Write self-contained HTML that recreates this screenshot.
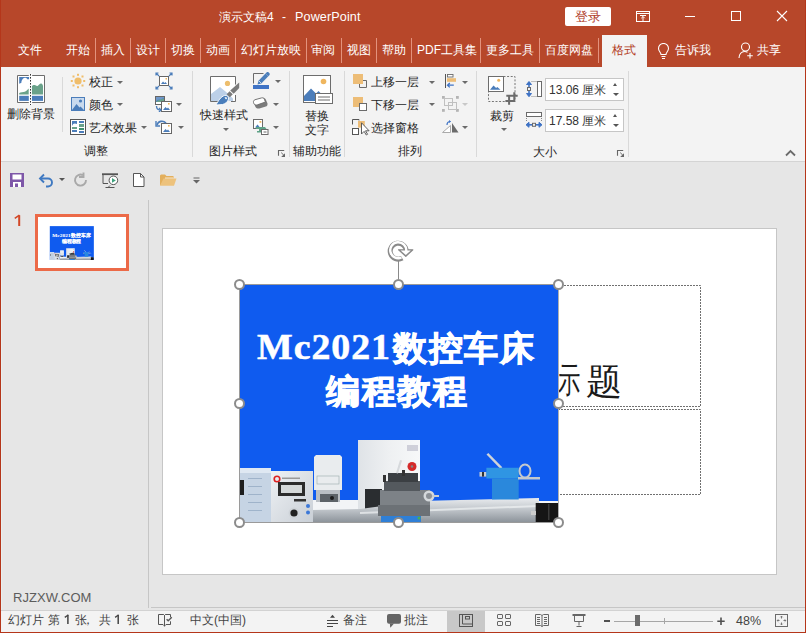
<!DOCTYPE html>
<html><head><meta charset="utf-8">
<style>
*{margin:0;padding:0;box-sizing:border-box}
html,body{width:806px;height:633px;overflow:hidden;background:#E6E6E6;font-family:"Liberation Sans",sans-serif;color:#333}
.a{position:absolute}
#title{left:0;top:0;width:806px;height:67px;background:#B7472A}
.t{position:absolute;font-size:12px;line-height:14px;white-space:nowrap}
.tab{color:#fff;top:43px}
.tsep{position:absolute;top:38px;width:1px;height:25px;background:#E3927D}
#ribbon{left:0;top:67px;width:806px;height:94px;background:#F3F3F3}
#rline{left:0;top:161px;width:806px;height:1px;background:#D4D4D4}
.gsep{position:absolute;width:1px;background:#D9D9D9}
.lbl{color:#262626}
.cj{font-size:34px;line-height:40px;color:#fff;font-weight:bold;width:36px;-webkit-text-stroke:0.9px #fff}
.hd{width:11px;height:11px;border-radius:50%;background:#fff;border:2px solid #8c8c8c}
.sb{top:613px;color:#444}
.dd{position:absolute;width:0;height:0;border-left:3px solid transparent;border-right:3px solid transparent;border-top:3px solid #6a6a6a;margin-left:-0.5px;margin-top:-0.5px}
#frameL{left:0;top:0;width:1px;height:633px;background:#B5361A}
#frameR{left:805px;top:0;width:1px;height:633px;background:#B5361A}
#frameB{left:0;top:632px;width:806px;height:1px;background:#B5361A}
#status{left:0;top:610px;width:806px;height:22px;background:#F3F3F3;border-top:1px solid #D2D2D2}
#slide{left:162px;top:228px;width:615px;height:347px;background:#fff;border:1px solid #C6C6C6}
</style></head><body>
<div id="title" class="a"></div>
<div class="t a" style="left:219px;top:10px;color:#fff;font-size:12px">演示文稿4</div><div class="t a" style="left:282px;top:9.5px;color:#fff;font-size:12px">-</div><div class="t a" style="left:295px;top:10px;color:#fff;font-size:12.6px;letter-spacing:0.12px">PowerPoint</div>
<!-- login -->
<div class="a" style="left:565px;top:7px;width:46px;height:19px;background:#fff;border-radius:2px"></div>
<div class="t a" style="left:575px;top:9px;color:#B0402A;font-size:13px;line-height:15px">登录</div>

<!-- tabs -->
<div class="t tab" style="left:18px">文件</div>
<div class="t tab" style="left:66px">开始</div>
<div class="tsep" style="left:95px"></div>
<div class="t tab" style="left:101px">插入</div>
<div class="tsep" style="left:130px"></div>
<div class="t tab" style="left:136px">设计</div>
<div class="tsep" style="left:165px"></div>
<div class="t tab" style="left:171px">切换</div>
<div class="tsep" style="left:200px"></div>
<div class="t tab" style="left:206px">动画</div>
<div class="tsep" style="left:235px"></div>
<div class="t tab" style="left:241px">幻灯片放映</div>
<div class="tsep" style="left:306px"></div>
<div class="t tab" style="left:311px">审阅</div>
<div class="tsep" style="left:341px"></div>
<div class="t tab" style="left:347px">视图</div>
<div class="tsep" style="left:376px"></div>
<div class="t tab" style="left:382px">帮助</div>
<div class="tsep" style="left:411px"></div>
<div class="t tab" style="left:417px">PDF工具集</div>
<div class="tsep" style="left:480px"></div>
<div class="t tab" style="left:486px">更多工具</div>
<div class="tsep" style="left:539px"></div>
<div class="t tab" style="left:545px">百度网盘</div>
<div class="tsep" style="left:598px"></div>
<div class="a" style="left:602px;top:35px;width:45px;height:32px;background:#F3F3F3"></div>
<div class="t tab" style="left:612px;top:42.5px;color:#B23C1E">格式</div>
<div class="t tab" style="left:675px">告诉我</div>
<div class="t tab" style="left:757px">共享</div>

<div id="ribbon" class="a"></div>
<div id="rline" class="a"></div>

<!-- ===== RIBBON CONTENT ===== -->
<!-- group 调整 -->
<svg class="a" style="left:16px;top:73px" width="31" height="33" viewBox="16 73 31 33">
 <rect x="18" y="76" width="26" height="26" fill="#fff"/>
 <path d="M28.8 75.5H17.5v27h11.3M32.2 75.5h12.3v27H32.2" fill="none" stroke="#6D6D6D"/>
 <path d="M19.2 76.9h10v2.6c-0.6-0.5-1.2-0.5-1.6 0c-1-2-3.5-2.3-4.8-0.6c-0.9 0.9-1.5 2.4-1.4 3.8c-0.7 0.2-1.3 0.6-2.2 1.1z" fill="#4B7DBA"/>
 <path d="M19.2 94.6v-1.5c1.5-1 4-1 5.5-1.3c1.5-0.5 2.6-1.8 4-3.3v6.1z" fill="#6AA28A"/>
 <path d="M31.8 94.6v-8.2c0.8-1.2 2.3-1.7 3.6-1.2c0.8 0.3 1.5 1 2.5 0.5c1.2-1 2-2.3 3.2-2.2c1.2 0.2 1.8 1.4 1.9 2.5v8.6z" fill="#6AA28A"/>
 <rect x="19.2" y="95.8" width="9.6" height="5.1" fill="#4B7DBA"/>
 <rect x="31.8" y="95.8" width="11.2" height="5.1" fill="#4B7DBA"/>
 <path d="M30.5 74v31" stroke="#fff" stroke-width="2.5"/><path d="M30.5 74v31" stroke="#333" stroke-width="1" stroke-dasharray="1.6,1.4"/>
</svg>
<div class="t lbl" style="left:7px;top:107px">删除背景</div>
<div class="gsep" style="left:62px;top:77px;height:55px"></div>

<svg class="a" style="left:70px;top:73px" width="16" height="16" viewBox="0 0 16 16">
 <circle cx="8" cy="8" r="3.6" fill="#F0BD6A"/>
 <g fill="#F0BD6A"><rect x="7" y="0.8" width="2" height="2"/><rect x="7" y="13.2" width="2" height="2"/><rect x="0.8" y="7" width="2" height="2"/><rect x="13.2" y="7" width="2" height="2"/>
 <rect x="2.5" y="2.5" width="2" height="2"/><rect x="11.5" y="2.5" width="2" height="2"/><rect x="2.5" y="11.5" width="2" height="2"/><rect x="11.5" y="11.5" width="2" height="2"/></g>
</svg>
<div class="t lbl" style="left:89px;top:75px">校正</div>
<div class="dd" style="left:117px;top:81px"></div>
<svg class="a" style="left:70px;top:96px" width="16" height="16" viewBox="0 0 16 16">
 <rect x="1.5" y="1.5" width="13" height="13" fill="#C9DAEE" stroke="#4B7DBA"/>
 <circle cx="10.5" cy="5" r="1.6" fill="#4B7DBA"/>
 <path d="M2 14l4.5-6l3 3.5l1-1l3.5 3.5z" fill="#4B7DBA"/>
</svg>
<div class="t lbl" style="left:89px;top:98px">颜色</div>
<div class="dd" style="left:117px;top:103px"></div>
<svg class="a" style="left:70px;top:119px" width="17" height="16" viewBox="0 0 17 16">
 <rect x="0.5" y="0.5" width="15" height="15" fill="#fff" stroke="#555"/>
 <rect x="2" y="2" width="5" height="5" fill="#4B7DBA"/><path d="M2 7c1-3 3-3 5-2v2z" fill="#fff"/>
 <rect x="9" y="2" width="5" height="2" fill="#4B7DBA"/><rect x="9" y="5" width="5" height="3" fill="#6AA28A"/>
 <rect x="2" y="8" width="5" height="2" fill="#6AA28A"/><rect x="2" y="11" width="5" height="2" fill="#4B7DBA"/>
 <rect x="9" y="9" width="5" height="2" fill="#3F8F6E"/><rect x="9" y="12" width="5" height="2" fill="#4B7DBA"/>
</svg>
<div class="t lbl" style="left:89px;top:121px">艺术效果</div>
<div class="dd" style="left:141px;top:126px"></div>

<svg class="a" style="left:155px;top:72px" width="18" height="18" viewBox="0 0 18 18">
 <rect x="4.5" y="4.5" width="9" height="9" fill="#fff" stroke="#666"/>
 <path d="M6 12l2-2.5l1.5 1.5l1-1l1.5 2z" fill="#4B7DBA"/><rect x="10.5" y="6" width="1.5" height="1.5" fill="#EFB65E"/>
 <g stroke="#4B7DBA" stroke-width="1.2" fill="none"><path d="M1 1l3 3M1 3.5V1h2.5"/><path d="M17 1l-3 3M17 3.5V1h-2.5"/><path d="M1 17l3-3M1 14.5V17h2.5"/><path d="M17 17l-3-3M17 14.5V17h-2.5"/></g>
</svg>
<svg class="a" style="left:155px;top:96px" width="18" height="16" viewBox="0 0 18 16">
 <rect x="0.5" y="0.5" width="9" height="8" fill="#fff" stroke="#666"/>
 <path d="M1 5c2-2 4-1 8-3v4H1z" fill="#6AA28A"/><path d="M1 1h8v2c-3 0-5 1-8 3z" fill="#4B7DBA" opacity="0.8"/>
 <rect x="6.5" y="5.5" width="10" height="10" fill="#fff" stroke="#666"/>
 <path d="M8 14l2.5-3l1.5 1.5l1-1l2 2.5z" fill="#4B7DBA"/><rect x="13" y="7" width="1.6" height="1.6" fill="#EFB65E"/>
 <path d="M1.5 10c0 3 2 4 4 4" stroke="#4B7DBA" stroke-width="1.3" fill="none"/><path d="M4 12l2 2l-2 2" stroke="#4B7DBA" stroke-width="1.3" fill="none"/>
</svg>
<div class="dd" style="left:176px;top:103px"></div>
<svg class="a" style="left:155px;top:119px" width="18" height="15" viewBox="0 0 18 15">
 <rect x="6.5" y="4.5" width="10" height="10" fill="#fff" stroke="#666"/>
 <path d="M8 13l2.5-3l1.5 1.5l1-1l2 2.5z" fill="#4B7DBA"/><rect x="13" y="6" width="1.6" height="1.6" fill="#EFB65E"/>
 <path d="M2 6c1-4 6-5 9-2" stroke="#4B7DBA" stroke-width="1.6" fill="none"/><path d="M1 2v5h4" stroke="#4B7DBA" stroke-width="1.4" fill="none"/>
</svg>
<div class="dd" style="left:178px;top:126px"></div>
<div class="t lbl" style="left:84px;top:144px">调整</div>
<div class="gsep" style="left:192px;top:71px;height:86px"></div>

<!-- group 图片样式 -->
<svg class="a" style="left:208px;top:74px" width="34" height="33" viewBox="208 74 34 33">
 <rect x="211" y="77" width="24" height="24" fill="#fff"/>
 <path d="M218 101.5h-7.5v-25h25v8M235.5 95v6.5h-4.5" fill="none" stroke="#6D6D6D"/>
 <circle cx="227.5" cy="83.4" r="2.6" fill="#EDBE6E"/>
 <path d="M211 101V93.9l9-6.8l8.5 6.8l4.5 4.5v2.6z" fill="#BCD0E8"/>
 <path d="M239.2 82.5v5.5l-5.5 5.8l-3.5-3.3z" fill="#7a7a7a"/>
 <path d="M232.8 94.2l-3 3l-3.2-3l3-3z" fill="#7a7a7a"/>
 <path d="M216 105c2-4 5-8.5 8.5-9.5c2.2-0.6 4.5 0.8 4 3.5c-0.6 3-3.5 5-6 5.5z" fill="#4A7EBB" stroke="#fff" stroke-width="0.9"/>
 <path d="M224.5 97.5c1-0.6 2.3-0.4 2.8 0.6l-1.3 1.5" fill="#fff"/>
</svg>
<div class="t lbl" style="left:200px;top:108px">快速样式</div>
<div class="dd" style="left:223px;top:128px"></div>
<svg class="a" style="left:252px;top:72px" width="18" height="18" viewBox="252 72 18 18">
 <path d="M253.5 83.5V73.5h10" stroke="#6b6b6b" fill="none"/>
 <path d="M257.5 84.5l1-3.8l7-7.2l2.8 2.8l-7 7.2z" fill="#4A7EBB"/>
 <path d="M265.5 73.5l1-1c0.8-0.6 1.6-0.6 2.2 0l0.6 0.6c0.6 0.6 0.6 1.4 0 2.2l-1 1z" fill="#4A7EBB"/>
 <path d="M259 81l2 2" stroke="#fff" stroke-width="0.7"/>
 <rect x="253" y="85" width="16" height="4" fill="#3F73C5"/>
</svg>
<div class="dd" style="left:275px;top:80px"></div>
<svg class="a" style="left:252px;top:96px" width="17" height="14" viewBox="252 96 17 14">
 <path d="M254 103.5c-0.6-1.5 0-3 1.5-3.8l6.5-1.8c1.6-0.4 3 0.3 3.8 1.6l1.5 3.5c0.6 1.5 0 3-1.5 3.5l-6.5 2c-1.6 0.4-3-0.3-3.8-1.6z" fill="#7b7b7b"/>
 <path d="M253.5 102.5c-0.3-1.2 0.3-2.3 1.5-2.8l6.5-1.8c1.2-0.3 2.3 0.2 2.8 1.3l1.2 2.8l-8 2.8c-1.5 0.5-3 0-3.5-1z" fill="#fff" stroke="#6b6b6b" stroke-width="0.9"/>
</svg>
<div class="dd" style="left:273px;top:103px"></div>
<svg class="a" style="left:252px;top:118px" width="18" height="18" viewBox="252 118 18 18">
 <rect x="253.5" y="119.5" width="9" height="9" fill="#fff" stroke="#6b6b6b"/>
 <path d="M255 127.5l2.5-3l2.5 3z" fill="#4A7EBB"/><rect x="259.5" y="121" width="1.8" height="1.8" fill="#EFB65E"/>
 <path d="M256 127h9l1.5 2h-5.5v3.5h-4v-1.5h2v-2h-3z" fill="#5FA287"/>
 <rect x="261.5" y="129.5" width="6.5" height="5" fill="#fff" stroke="#6b6b6b"/><path d="M263.5 132h3" stroke="#6b6b6b"/>
</svg>
<div class="dd" style="left:273px;top:126px"></div>
<div class="t lbl" style="left:209px;top:144px">图片样式</div>
<svg class="a" style="left:277px;top:149px" width="10" height="10" viewBox="277 149 10 10"><path d="M278.5 155.8V150.5H284.2" stroke="#666" fill="none" stroke-width="1.1"/><path d="M281.2 152.6l2.6 2.6" stroke="#666" stroke-width="1"/><path d="M285 153.2v3.8h-3.8z" fill="#666"/></svg>
<div class="gsep" style="left:289px;top:71px;height:86px"></div>

<!-- group 辅助功能 -->
<svg class="a" style="left:302px;top:74px" width="32" height="32" viewBox="0 0 32 32">
 <rect x="1.5" y="1.5" width="27" height="27" fill="#fff" stroke="#6D6D6D"/>
 <circle cx="21.5" cy="7.5" r="2.8" fill="#EFB65E"/>
 <path d="M2 27V22l7-7.5l5 5l2.5-2.5l5 5V27z" fill="#4B7DBA"/>
 <rect x="13.5" y="19.5" width="17" height="10" fill="#fff" stroke="#6D6D6D"/>
 <path d="M16 23h12M16 26h12" stroke="#6D6D6D"/>
</svg>
<div class="t lbl" style="left:305px;top:109px">替换</div>
<div class="t lbl" style="left:305px;top:123px">文字</div>
<div class="t lbl" style="left:293px;top:144px">辅助功能</div>
<div class="gsep" style="left:344px;top:71px;height:86px"></div>

<!-- group 排列 -->
<svg class="a" style="left:352px;top:73px" width="16" height="16" viewBox="0 0 16 16">
 <path d="M9.5 7.5h5v7h-7v-4" stroke="#6b6b6b" fill="none"/>
 <rect x="1" y="1" width="10" height="10" fill="#EDBD77"/>
</svg>
<div class="t lbl" style="left:371px;top:75px">上移一层</div>
<div class="dd" style="left:429px;top:81px"></div>
<svg class="a" style="left:352px;top:96px" width="16" height="16" viewBox="0 0 16 16">
 <rect x="1" y="1" width="10" height="10" fill="#EDBD77"/>
 <rect x="7.5" y="7.5" width="7" height="7" fill="#fff" stroke="#6b6b6b"/>
</svg>
<div class="t lbl" style="left:371px;top:98px">下移一层</div>
<div class="dd" style="left:429px;top:103px"></div>
<svg class="a" style="left:351px;top:118px" width="19" height="18" viewBox="351 118 19 18">
 <path d="M352.5 124.5v-5h6.5v1" stroke="#555" fill="none"/>
 <rect x="358" y="121" width="6.8" height="6.6" fill="#EDBD77"/>
 <rect x="352.5" y="128.5" width="6" height="6" fill="#fff" stroke="#555"/>
 <path d="M361.5 122.8v11.2l2.6-2.6l2.2 3.6l1.3-0.7l-2.1-3.5h3.6z" fill="#fff" stroke="#555" stroke-width="0.95" stroke-linejoin="round"/>
</svg>
<div class="t lbl" style="left:371px;top:121px">选择窗格</div>
<svg class="a" style="left:444px;top:73px" width="14" height="16" viewBox="444 73 14 16">
 <path d="M445.5 74v14" stroke="#555"/>
 <rect x="447.5" y="74.5" width="5.5" height="2.5" fill="#fff" stroke="#6b6b6b" stroke-width="0.9"/>
 <rect x="447" y="78.2" width="9" height="3.6" fill="#EDBD77"/>
 <path d="M453.8 85.2h-6M449.8 83l-2.3 2.2l2.3 2.2" stroke="#3F73C5" stroke-width="1.3" fill="none"/>
</svg>
<div class="dd" style="left:462px;top:81px"></div>
<svg class="a" style="left:441px;top:95px" width="18" height="18" viewBox="441 95 18 18">
 <g fill="#b4b4b4"><rect x="442" y="96" width="2.8" height="2.8"/><rect x="456" y="96" width="2.8" height="2.8"/><rect x="442" y="109" width="2.8" height="2.8"/><rect x="456" y="109" width="2.8" height="2.8"/></g>
 <rect x="444.5" y="98.5" width="8" height="7" fill="none" stroke="#c0c0c0"/>
 <rect x="448.5" y="102.5" width="8" height="7" fill="none" stroke="#c0c0c0"/>
</svg>
<div class="dd" style="left:462px;top:103px;border-top-color:#c8c8c8"></div>
<svg class="a" style="left:442px;top:120px" width="17" height="13" viewBox="0 0 17 13">
 <path d="M0.5 12.5L8.5 5.5V12.5z" fill="#fff" stroke="#aaa"/>
 <path d="M10 3L16.5 12.5H10z" fill="#6b6b6b"/>
 <path d="M5 5c0-2 1.5-3.5 3.5-3.5" stroke="#3F73C5" stroke-width="1.2" fill="none"/><path d="M7 0l2 1.5l-2 1.5" fill="#3F73C5"/>
</svg>
<div class="dd" style="left:462px;top:126px"></div>
<div class="t lbl" style="left:398px;top:144px">排列</div>
<div class="gsep" style="left:476px;top:71px;height:86px"></div>

<!-- group 大小 -->
<svg class="a" style="left:487px;top:75px" width="32" height="31" viewBox="487 75 32 31">
 <path d="M503.5 76.5h11.5v25H488.5V91.5" fill="none" stroke="#777" stroke-dasharray="2,1.6"/>
 <rect x="488.5" y="76.5" width="15" height="15" fill="#fff" stroke="#6D6D6D"/>
 <circle cx="498.7" cy="80.3" r="1.5" fill="#EFB65E"/>
 <path d="M490 89.8l3.5-4.3l2.6 2.6l1.2-1.2l3.2 2.9z" fill="#4B7DBA"/>
 <path d="M509.1 96.5v8.3M505.4 101h9.9M514.3 92.3v8.7M506.3 95.8h11.4" stroke="#6b6b6b" stroke-width="2" fill="none"/>
</svg>
<div class="t lbl" style="left:490px;top:109px">裁剪</div>
<div class="dd" style="left:501px;top:128px"></div>
<svg class="a" style="left:525px;top:79px" width="18" height="20" viewBox="525 79 18 20">
 <path d="M529 82.5v13" stroke="#3F73C5" stroke-width="1.6"/>
 <path d="M526.5 84.5l2.5-3l2.5 3z M526.5 93.5l2.5 3.2l2.5-3.2z" fill="#3F73C5" stroke="#3F73C5" stroke-width="1"/>
 <rect x="527.5" y="87.5" width="3" height="3" fill="#F3F3F3" stroke="#6b6b6b" stroke-width="1"/>
 <path d="M531.5 81.5h5M531.5 96.5h5" stroke="#888" stroke-dasharray="1,1"/>
 <rect x="537.5" y="81.5" width="4" height="15" fill="#fff" stroke="#6b6b6b"/>
</svg>
<div class="a" style="left:545px;top:78px;width:79px;height:23px;background:#fff;border:1px solid #C6C6C6"></div>
<div class="t a" style="left:549px;top:83px;color:#333;font-size:12px">13.06 厘米</div>
<div class="a" style="left:613px;top:83px;width:0;height:0;border-left:2.5px solid transparent;border-right:2.5px solid transparent;border-bottom:3px solid #555"></div>
<div class="dd" style="left:613px;top:93px;border-top-color:#555"></div>
<svg class="a" style="left:525px;top:111px" width="18" height="17" viewBox="525 111 18 17">
 <rect x="526.5" y="112.5" width="15" height="4" fill="#fff" stroke="#6b6b6b"/>
 <path d="M526.5 118v3.5M541.5 118v3.5" stroke="#888" stroke-dasharray="1,1"/>
 <path d="M528 124.8h12" stroke="#3F73C5" stroke-width="1.6"/>
 <path d="M529 122.3l-3 2.5l3 2.5z M539 122.3l3 2.5l-3 2.5z" fill="#3F73C5" stroke="#3F73C5" stroke-width="1"/>
 <rect x="532.5" y="123.3" width="3" height="3" fill="#F3F3F3" stroke="#6b6b6b" stroke-width="1"/>
</svg>
<div class="a" style="left:545px;top:109px;width:79px;height:23px;background:#fff;border:1px solid #C6C6C6"></div>
<div class="t a" style="left:549px;top:114px;color:#333;font-size:12px">17.58 厘米</div>
<div class="a" style="left:613px;top:114px;width:0;height:0;border-left:2.5px solid transparent;border-right:2.5px solid transparent;border-bottom:3px solid #555"></div>
<div class="dd" style="left:613px;top:124px;border-top-color:#555"></div>
<div class="t lbl" style="left:533px;top:145px">大小</div>
<svg class="a" style="left:616px;top:149px" width="10" height="10" viewBox="616 149 10 10"><path d="M617.5 155.8V150.5H623.2" stroke="#666" fill="none" stroke-width="1.1"/><path d="M620.2 152.6l2.6 2.6" stroke="#666" stroke-width="1"/><path d="M624 153.2v3.8h-3.8z" fill="#666"/></svg>
<div class="gsep" style="left:628px;top:71px;height:86px"></div>
<svg class="a" style="left:785px;top:149px" width="11" height="8" viewBox="0 0 11 8"><path d="M1 6.5l4.5-4.5l4.5 4.5" stroke="#6b6b6b" stroke-width="1.8" fill="none"/></svg>


<!-- slide pane -->
<div class="a" style="left:148px;top:200px;width:1px;height:408px;background:#C6C6C6"></div>
<div class="a" style="left:151px;top:607px;width:654px;height:1px;background:#C6C6C6"></div>
<svg class="a" style="left:13px;top:213px" width="10" height="15" viewBox="13 213 10 15"><path d="M19.2 215.2V226" stroke="#D24726" stroke-width="2"/><path d="M14.8 218.3l4.6-3.1" stroke="#D24726" stroke-width="1.6"/></svg>
<div class="a" style="left:35px;top:214px;width:94px;height:57px;border:3px solid #EC6A48;background:#fff"></div>
<div class="a" style="left:39px;top:218px;width:87px;height:50px;overflow:hidden"><div class="a" style="left:0;top:0;width:615px;height:347px;transform-origin:0 0;transform:scale(0.1385,0.1425)"><div class="a" style="left:-162px;top:-228px;width:806px;height:633px"><div class="a" style="left:240px;top:285px;width:318px;height:237px;background:#0F5BEF;overflow:hidden">
 <div class="t a" style="left:17px;top:43px;font-size:35px;line-height:40px;color:#fff;font-weight:bold;font-family:'Liberation Serif',serif;letter-spacing:0.9px;transform-origin:0 0;transform:scaleX(1.08);-webkit-text-stroke:0.5px #fff">Mc2021</div><div class="t a cj" style="left:153.0px;top:43px">数</div><div class="t a cj" style="left:188.5px;top:43px">控</div><div class="t a cj" style="left:224.0px;top:43px">车</div><div class="t a cj" style="left:259.5px;top:43px">床</div><div class="t a cj" style="left:86.0px;top:85.5px">编</div><div class="t a cj" style="left:121.5px;top:85.5px">程</div><div class="t a cj" style="left:157.0px;top:85.5px">教</div><div class="t a cj" style="left:192.5px;top:85.5px">程</div>
 
 <svg class="a" style="left:0;top:149px" width="318" height="88" viewBox="240 434 318 88">
 <defs>
  <linearGradient id="bedg2" x1="0" y1="0" x2="0" y2="1"><stop offset="0" stop-color="#e9ecef"/><stop offset="0.45" stop-color="#c3c8cd"/><stop offset="1" stop-color="#8d949b"/></linearGradient>
  <linearGradient id="boxg2" x1="0" y1="0" x2="1" y2="0"><stop offset="0" stop-color="#dfe3e7"/><stop offset="0.5" stop-color="#eef0f2"/><stop offset="1" stop-color="#f7f8f9"/></linearGradient>
  <linearGradient id="panelg2" x1="0" y1="0" x2="1" y2="1"><stop offset="0" stop-color="#eef1f4"/><stop offset="1" stop-color="#c9cfd6"/></linearGradient>
 </defs>
 <!-- white ground -->
 <path d="M312 500h50v15h-50z" fill="#f2f4f6"/>
 <path d="M537 501h21v4h-21z" fill="#f4f6f8"/>
 <!-- white tall box -->
 <path d="M358 440h62v69h-62z" fill="url(#boxg2)"/>
 <rect x="407" y="445" width="11" height="6" fill="#aab" opacity="0.5"/>
 <path d="M365 489h17v20h-17z" fill="#2a2d30"/>
 <!-- bed -->
 <path d="M312 510l48-1l60-8l119-3V522H312z" fill="url(#bedg2)"/>
 <path d="M360 512l178-7v2l-178 7z" fill="#f0f2f4" opacity="0.7"/>
 <!-- left panel -->
 <path d="M240 470l3-2h28v54h-31z" fill="#c6d4e4"/>
 <path d="M240 468h31v5h-31z" fill="#dfe8f2"/>
 <g fill="#8fa6c0" opacity="0.7"><rect x="248" y="478" width="14" height="1"/><rect x="248" y="486" width="14" height="1"/><rect x="248" y="494" width="14" height="1"/><rect x="248" y="502" width="14" height="1"/><rect x="248" y="510" width="14" height="1"/></g>
 <path d="M240 480h4v15h-4z" fill="#1e1e1e"/>
 <!-- control panel -->
 <path d="M271 471h42v51h-42z" fill="url(#panelg2)"/>
 <circle cx="277" cy="479" r="2.8" fill="none" stroke="#d22" stroke-width="1.6"/>
 <rect x="282" y="477.5" width="18" height="1.5" fill="#999"/>
 <rect x="278" y="482" width="27" height="14" fill="#2b2b2b"/>
 <rect x="281" y="485" width="21" height="8" fill="#d4d8d9"/>
 <rect x="294" y="499" width="12" height="2.5" fill="#333"/>
 <circle cx="294" cy="513" r="5.5" fill="#cfd4d9"/><circle cx="294" cy="513" r="3.6" fill="#222"/>
 <circle cx="308" cy="506" r="2" fill="#3c78d8"/><circle cx="308" cy="512.5" r="2" fill="#3c78d8"/>
 <!-- chuck box -->
 <path d="M314 457l2-2h24l2 2v33h-28z" fill="#e9ecee"/>
 <rect x="317" y="476" width="22" height="8" fill="none" stroke="#9aa" stroke-width="0.6"/>
 <path d="M316 490h24v12h-24z" fill="#b9bec3"/>
 <path d="M320 494h18v8h-18z" fill="#5d6368"/>
 <circle cx="332" cy="498" r="2" fill="#1c1c1c"/>
 <!-- tool post -->
 <path d="M378 505h52v11h-52z" fill="#6c7176"/>
 <path d="M380 490h50v15h-50z" fill="#7d8287"/>
 <path d="M384 481h36v10h-36z" fill="#54595e"/>
 <path d="M388 473h30v9h-30z" fill="#3b3f43"/>
 <rect x="383" y="475" width="3" height="7" fill="#333"/><rect x="402" y="470" width="3" height="6" fill="#333"/>
 <path d="M396 473l4-13l2 0.5l-4 13z" fill="#d6d9dc"/>
 <circle cx="412" cy="466.5" r="4.5" fill="#d42a2a"/><circle cx="412" cy="466.5" r="1.2" fill="#888"/>
 <circle cx="429" cy="496" r="5.5" fill="#d5d9dc"/><circle cx="429" cy="496" r="3" fill="#8c9196"/>
 <path d="M432 495h7v2h-7z" fill="#c8cdd1"/>
 <path d="M381 516h40v6h-40z" fill="#2f7fd6"/>
 <circle cx="419" cy="518" r="1.5" fill="#4caf50"/>
 <!-- tailstock -->
 <path d="M479.5 472h7v4.6h-7z" fill="#c9ced2"/><rect x="482" y="472" width="2" height="4.6" fill="#333"/>
 <path d="M488.3 453l14 14.3l-1.8 1.6l-14-14.3z" fill="#d0d4d8"/>
 <path d="M486.4 467.8h32.3v10.7h-32.3z" fill="#2f95e3"/>
 <path d="M492 478.5h26.7v21h-26.7z" fill="#2a88dc"/>
 <ellipse cx="525" cy="471" rx="5.5" ry="6.5" fill="none" stroke="#c3c9ce" stroke-width="2"/>
 <path d="M518 477h22v2.5h-22z" fill="#c2c8cd"/>
 <!-- motor -->
 <path d="M535.7 503h22.3v19h-22.3z" fill="#151515"/>
 <path d="M548 504h1.5v16h-1.5z" fill="#3a3a3a"/>
 <path d="M531 511h5v4h-5z" fill="#ccc"/>
</svg>
</div></div></div></div>
<div id="slide" class="a"></div>


<!-- placeholders -->
<svg class="a" style="left:300px;top:280px" width="405" height="220" viewBox="300 280 405 220">
 <path d="M300 285.5H700.5V406.5H300M300 409.5H700.5V494.5H300" fill="none" stroke="#707070" stroke-dasharray="2,1"/>
</svg>

<div class="t a" style="left:558px;top:360px;font-size:35px;line-height:40px;color:#1a1a1a;font-weight:300;transform-origin:0 0;transform:scaleX(0.64)">示</div><div class="t a" style="left:585.5px;top:361.5px;font-size:35.5px;line-height:40px;color:#1a1a1a;font-weight:300">题</div>
<!-- picture -->
<div class="a" style="left:240px;top:285px;width:318px;height:237px;background:#0F5BEF;overflow:hidden">
 <div class="t a" style="left:17px;top:43px;font-size:35px;line-height:40px;color:#fff;font-weight:bold;font-family:'Liberation Serif',serif;letter-spacing:0.9px;transform-origin:0 0;transform:scaleX(1.08);-webkit-text-stroke:0.5px #fff">Mc2021</div><div class="t a cj" style="left:153.0px;top:43px">数</div><div class="t a cj" style="left:188.5px;top:43px">控</div><div class="t a cj" style="left:224.0px;top:43px">车</div><div class="t a cj" style="left:259.5px;top:43px">床</div><div class="t a cj" style="left:86.0px;top:85.5px">编</div><div class="t a cj" style="left:121.5px;top:85.5px">程</div><div class="t a cj" style="left:157.0px;top:85.5px">教</div><div class="t a cj" style="left:192.5px;top:85.5px">程</div>
 
 <svg class="a" style="left:0;top:149px" width="318" height="88" viewBox="240 434 318 88">
 <defs>
  <linearGradient id="bedg" x1="0" y1="0" x2="0" y2="1"><stop offset="0" stop-color="#e9ecef"/><stop offset="0.45" stop-color="#c3c8cd"/><stop offset="1" stop-color="#8d949b"/></linearGradient>
  <linearGradient id="boxg" x1="0" y1="0" x2="1" y2="0"><stop offset="0" stop-color="#dfe3e7"/><stop offset="0.5" stop-color="#eef0f2"/><stop offset="1" stop-color="#f7f8f9"/></linearGradient>
  <linearGradient id="panelg" x1="0" y1="0" x2="1" y2="1"><stop offset="0" stop-color="#eef1f4"/><stop offset="1" stop-color="#c9cfd6"/></linearGradient>
 </defs>
 <!-- white ground -->
 <path d="M312 500h50v15h-50z" fill="#f2f4f6"/>
 <path d="M537 501h21v4h-21z" fill="#f4f6f8"/>
 <!-- white tall box -->
 <path d="M358 440h62v69h-62z" fill="url(#boxg)"/>
 <rect x="407" y="445" width="11" height="6" fill="#aab" opacity="0.5"/>
 <path d="M365 489h17v20h-17z" fill="#2a2d30"/>
 <!-- bed -->
 <path d="M312 510l48-1l60-8l119-3V522H312z" fill="url(#bedg)"/>
 <path d="M360 512l178-7v2l-178 7z" fill="#f0f2f4" opacity="0.7"/>
 <!-- left panel -->
 <path d="M240 470l3-2h28v54h-31z" fill="#c6d4e4"/>
 <path d="M240 468h31v5h-31z" fill="#dfe8f2"/>
 <g fill="#8fa6c0" opacity="0.7"><rect x="248" y="478" width="14" height="1"/><rect x="248" y="486" width="14" height="1"/><rect x="248" y="494" width="14" height="1"/><rect x="248" y="502" width="14" height="1"/><rect x="248" y="510" width="14" height="1"/></g>
 <path d="M240 480h4v15h-4z" fill="#1e1e1e"/>
 <!-- control panel -->
 <path d="M271 471h42v51h-42z" fill="url(#panelg)"/>
 <circle cx="277" cy="479" r="2.8" fill="none" stroke="#d22" stroke-width="1.6"/>
 <rect x="282" y="477.5" width="18" height="1.5" fill="#999"/>
 <rect x="278" y="482" width="27" height="14" fill="#2b2b2b"/>
 <rect x="281" y="485" width="21" height="8" fill="#d4d8d9"/>
 <rect x="294" y="499" width="12" height="2.5" fill="#333"/>
 <circle cx="294" cy="513" r="5.5" fill="#cfd4d9"/><circle cx="294" cy="513" r="3.6" fill="#222"/>
 <circle cx="308" cy="506" r="2" fill="#3c78d8"/><circle cx="308" cy="512.5" r="2" fill="#3c78d8"/>
 <!-- chuck box -->
 <path d="M314 457l2-2h24l2 2v33h-28z" fill="#e9ecee"/>
 <rect x="317" y="476" width="22" height="8" fill="none" stroke="#9aa" stroke-width="0.6"/>
 <path d="M316 490h24v12h-24z" fill="#b9bec3"/>
 <path d="M320 494h18v8h-18z" fill="#5d6368"/>
 <circle cx="332" cy="498" r="2" fill="#1c1c1c"/>
 <!-- tool post -->
 <path d="M378 505h52v11h-52z" fill="#6c7176"/>
 <path d="M380 490h50v15h-50z" fill="#7d8287"/>
 <path d="M384 481h36v10h-36z" fill="#54595e"/>
 <path d="M388 473h30v9h-30z" fill="#3b3f43"/>
 <rect x="383" y="475" width="3" height="7" fill="#333"/><rect x="402" y="470" width="3" height="6" fill="#333"/>
 <path d="M396 473l4-13l2 0.5l-4 13z" fill="#d6d9dc"/>
 <circle cx="412" cy="466.5" r="4.5" fill="#d42a2a"/><circle cx="412" cy="466.5" r="1.2" fill="#888"/>
 <circle cx="429" cy="496" r="5.5" fill="#d5d9dc"/><circle cx="429" cy="496" r="3" fill="#8c9196"/>
 <path d="M432 495h7v2h-7z" fill="#c8cdd1"/>
 <path d="M381 516h40v6h-40z" fill="#2f7fd6"/>
 <circle cx="419" cy="518" r="1.5" fill="#4caf50"/>
 <!-- tailstock -->
 <path d="M479.5 472h7v4.6h-7z" fill="#c9ced2"/><rect x="482" y="472" width="2" height="4.6" fill="#333"/>
 <path d="M488.3 453l14 14.3l-1.8 1.6l-14-14.3z" fill="#d0d4d8"/>
 <path d="M486.4 467.8h32.3v10.7h-32.3z" fill="#2f95e3"/>
 <path d="M492 478.5h26.7v21h-26.7z" fill="#2a88dc"/>
 <ellipse cx="525" cy="471" rx="5.5" ry="6.5" fill="none" stroke="#c3c9ce" stroke-width="2"/>
 <path d="M518 477h22v2.5h-22z" fill="#c2c8cd"/>
 <!-- motor -->
 <path d="M535.7 503h22.3v19h-22.3z" fill="#151515"/>
 <path d="M548 504h1.5v16h-1.5z" fill="#3a3a3a"/>
 <path d="M531 511h5v4h-5z" fill="#ccc"/>
</svg>
</div>
<!-- selection -->
<div class="a" style="left:239px;top:284px;width:320px;height:239px;border:1px solid #9a9a9a;border-right-color:#b0b0b0"></div>
<div class="a" style="left:398px;top:261px;width:1px;height:18px;background:#8a8a8a"></div>
<div class="a hd" style="left:234.0px;top:279.0px"></div>
<div class="a hd" style="left:393.0px;top:279.0px"></div>
<div class="a hd" style="left:553.0px;top:279.0px"></div>
<div class="a hd" style="left:234.0px;top:398.0px"></div>
<div class="a hd" style="left:553.0px;top:398.0px"></div>
<div class="a hd" style="left:234.0px;top:517.0px"></div>
<div class="a hd" style="left:393.0px;top:517.0px"></div>
<div class="a hd" style="left:553.0px;top:517.0px"></div>

<svg class="a" style="left:384px;top:236px" width="34" height="28" viewBox="384 236 34 28">
 <path d="M406.2 251.2A8 8 0 1 0 402.2 258.1" fill="none" stroke="#8a8a8a" stroke-width="5"/>
 <path d="M398.6 249.8h14.2l-7 6.4z" fill="#8a8a8a" stroke="#8a8a8a" stroke-width="1.3" stroke-linejoin="round"/>
 <path d="M406.2 251A8 8 0 1 0 401.5 257.5" fill="none" stroke="#fff" stroke-width="2.4"/>
 <path d="M400.6 250.5h10.2l-5 4.6z" fill="#fff"/>
</svg>

<div class="t a" style="left:13px;top:591px;color:#5c5c5c;font-size:13px;letter-spacing:0.05px">RJZXW.COM</div>

<div id="status" class="a"></div>
<div class="t a sb" style="left:8px">幻灯片</div><div class="t a sb" style="left:47.5px">第</div><svg class="a" style="left:62px;top:613px" width="8" height="13" viewBox="62 613 8 13"><path d="M67.9 614.8V624" stroke="#444" stroke-width="1.5"/><path d="M64.8 617.4l3.4-2.4" stroke="#444" stroke-width="1.3"/></svg><div class="t a sb" style="left:75px">张</div><div class="t a sb" style="left:82px">，</div><div class="t a sb" style="left:98.5px">共</div><svg class="a" style="left:113px;top:613px" width="8" height="13" viewBox="113 613 8 13"><path d="M118.2 614.8V624" stroke="#444" stroke-width="1.5"/><path d="M115.1 617.4l3.4-2.4" stroke="#444" stroke-width="1.3"/></svg><div class="t a sb" style="left:126.5px">张</div>
<div class="t a" style="left:190px;top:613px;color:#444">中文(中国)</div>
<div class="t a" style="left:343px;top:613px;color:#444">备注</div>
<div class="t a" style="left:404px;top:613px;color:#444">批注</div>
<div class="a" style="left:447px;top:611px;width:38px;height:21px;background:#C8C8C8"></div>
<div class="t a" style="left:736px;top:613.5px;color:#444;font-size:12.5px">48%</div>


<!-- title bar icons -->
<svg class="a" style="left:636px;top:10px" width="15" height="12" viewBox="0 0 15 12">
 <rect x="0.5" y="1.5" width="13" height="10" fill="none" stroke="#fff"/>
 <path d="M0.5 3.5h13" stroke="#fff"/>
 <path d="M4 5.5h6M7 11V6.5M5.3 8.2L7 6.5l1.7 1.7" stroke="#fff" fill="none"/>
</svg>
<div class="a" style="left:685px;top:16px;width:10px;height:1px;background:#fff"></div>
<div class="a" style="left:731px;top:11px;width:10px;height:10px;border:1px solid #fff"></div>
<svg class="a" style="left:776px;top:10px" width="12" height="12" viewBox="0 0 12 12"><path d="M1 1l10 10M11 1L1 11" stroke="#fff" stroke-width="1.1"/></svg>
<!-- tell me bulb -->
<svg class="a" style="left:657px;top:43px" width="13" height="17" viewBox="0 0 13 17">
 <path d="M4 11.5c0-2-2.5-3.2-2.5-6A5 5 0 0 1 11.5 5.5c0 2.8-2.5 4-2.5 6z" fill="none" stroke="#fff" stroke-width="1.1"/>
 <path d="M4.5 13.5h4M5 15.5h3" stroke="#fff" stroke-width="1.1"/>
</svg>
<!-- share person -->
<svg class="a" style="left:738px;top:42px" width="16" height="17" viewBox="0 0 16 17">
 <circle cx="7.5" cy="5" r="4" fill="none" stroke="#fff" stroke-width="1.1"/>
 <path d="M1 16c0-4 2.5-6.5 5.5-6.5c1.2 0 2.2 0.3 3 0.8" fill="none" stroke="#fff" stroke-width="1.1"/>
 <path d="M12 11v5.5M9.2 13.8h5.6" stroke="#fff" stroke-width="1.1"/>
</svg>

<!-- QAT -->
<svg class="a" style="left:10px;top:173px" width="14" height="14" viewBox="0 0 14 14">
 <path d="M0 0h14v14H0z" fill="#7E57A8"/>
 <rect x="2.5" y="1.5" width="9" height="5" fill="#fff"/>
 <rect x="3" y="9" width="8" height="5" fill="#fff"/><rect x="5" y="10.5" width="3" height="3.5" fill="#7E57A8"/>
</svg>
<svg class="a" style="left:38px;top:172px" width="16" height="16" viewBox="0 0 16 16">
 <path d="M3 6.5h7a4 4 0 0 1 0 8H8" stroke="#3F79C1" stroke-width="1.9" fill="none"/>
 <path d="M6 2.5L2 6.5l4 4" stroke="#3F79C1" stroke-width="1.9" fill="none"/>
</svg>
<div class="dd" style="left:59px;top:178px;border-left-width:3px;border-right-width:3px;border-top-width:3.5px;border-top-color:#555"></div>
<svg class="a" style="left:73px;top:172px" width="16" height="15" viewBox="0 0 16 15">
 <path d="M10 3.2A5.5 5.5 0 1 0 13 8" stroke="#A9A9A9" stroke-width="1.9" fill="none"/>
 <path d="M10.5 0.5v4.5H6" stroke="#A9A9A9" stroke-width="1.9" fill="none"/>
</svg>
<svg class="a" style="left:101px;top:172px" width="19" height="17" viewBox="101 172 19 17">
 <path d="M102 174.2h16" stroke="#555" stroke-width="1.8"/>
 <path d="M103 175v8.5h5" stroke="#555" fill="none"/>
 <circle cx="113.4" cy="180.3" r="4.3" fill="#fff" stroke="#555"/>
 <path d="M112 178v4.8l3.8-2.4z" fill="#3FA27D"/>
 <path d="M105.5 187.5h9M108 187.5l2-2" stroke="#555" fill="none"/>
</svg>
<svg class="a" style="left:132px;top:172px" width="14" height="17" viewBox="132 172 14 17">
 <path d="M133.5 173.5h7l3.5 3.5v9.5h-10.5z" fill="#fff" stroke="#555"/>
 <path d="M140.5 173.5v3.5h3.5" fill="none" stroke="#555"/>
</svg>
<svg class="a" style="left:159px;top:172px" width="19" height="15" viewBox="159 172 19 15">
 <path d="M160 185.8V175.5l1-1h4l1.5 1.5h6.5l1 1v2.5H165z" fill="#E3AF5C"/>
 <path d="M160 185.8l3.5-7.3h13l-2.5 7.3z" fill="#EDC27C"/>
 <path d="M165 177.5h9v1h-9z" fill="#fff" opacity="0.7"/>
</svg>
<svg class="a" style="left:193px;top:177px" width="7" height="7" viewBox="0 0 7 7"><path d="M0.5 1h6" stroke="#666"/><path d="M0 3h7L3.5 6.5z" fill="#666"/></svg>

<!-- status icons -->
<svg class="a" style="left:156px;top:612px" width="18" height="17" viewBox="156 612 18 17">
 <path d="M163.8 614.5H158.5V624.5H163M165.2 614.5H170.5V617.3M170.5 621.3V624.5H166" fill="none" stroke="#555"/>
 <path d="M164.5 615.2V626.3" stroke="#555"/>
 <path d="M163.3 624.6l1.2 1.6l1.2-1.6M163.6 614.6l0.9 0.9l0.9-0.9" fill="none" stroke="#555" stroke-width="0.9"/>
 <path d="M166.6 619.2l1.6 1.6l3.6-3.6" fill="none" stroke="#555" stroke-width="1.3"/>
</svg>
<svg class="a" style="left:326px;top:613px" width="14" height="15" viewBox="326 613 14 15">
 <path d="M330 617.8l2.5-3l2.5 3z" fill="#444"/>
 <path d="M327 620.5h11M327 623.5h11M327 626.5h6" stroke="#444"/>
</svg>
<svg class="a" style="left:386px;top:613px" width="16" height="16" viewBox="386 613 16 16">
 <rect x="387" y="614" width="14" height="9.8" rx="2" fill="#656565"/>
 <path d="M389.8 623.5l0.5 4.3l3.8-4.3z" fill="#656565"/>
</svg>
<svg class="a" style="left:458px;top:613px" width="16" height="15" viewBox="458 613 16 15">
 <rect x="459.5" y="614.5" width="13" height="12" fill="none" stroke="#555"/>
 <path d="M462.5 614.5v9.5h10" stroke="#555" fill="none"/>
 <rect x="465.5" y="616.5" width="4" height="2.5" fill="none" stroke="#555"/>
</svg>
<svg class="a" style="left:496px;top:613px" width="16" height="15" viewBox="496 613 16 15">
 <rect x="497.5" y="614.5" width="5" height="4" rx="0.5" fill="none" stroke="#666"/><rect x="505.5" y="614.5" width="5" height="4" rx="0.5" fill="none" stroke="#666"/>
 <rect x="497.5" y="621.5" width="5" height="4" rx="0.5" fill="none" stroke="#666"/><rect x="505.5" y="621.5" width="5" height="4" rx="0.5" fill="none" stroke="#666"/>
</svg>
<svg class="a" style="left:534px;top:613px" width="16" height="16" viewBox="534 613 16 16">
 <path d="M535.5 614.5h5l1.5 1l1.5-1h5v11h-5l-1.5 1l-1.5-1h-5z" fill="none" stroke="#666"/>
 <path d="M542 615.5v11M537 617.5h3M537 619.5h3M537 621.5h3M537 623.5h3M544 617.5h3M544 619.5h3M544 621.5h3M544 623.5h3" stroke="#666"/>
</svg>
<svg class="a" style="left:572px;top:613px" width="16" height="15" viewBox="572 613 16 15">
 <path d="M572.5 615h13" stroke="#666" stroke-width="2"/>
 <path d="M574.5 616v5.5h9V616" fill="none" stroke="#666"/>
 <path d="M579 621.5v4M576.5 626.5h5" stroke="#666"/>
</svg>
<div class="a" style="left:604px;top:620px;width:6px;height:2px;background:#505050"></div>
<div class="a" style="left:614px;top:621px;width:99px;height:1px;background:#A6A6A6"></div>
<div class="a" style="left:664px;top:618px;width:1px;height:6px;background:#A6A6A6"></div>
<div class="a" style="left:635px;top:615px;width:5px;height:11px;background:#6b6b6b"></div>
<svg class="a" style="left:716px;top:616px" width="10" height="10" viewBox="716 616 10 10"><path d="M721 617.5v7.5M717.3 621.2h7.4" stroke="#505050" stroke-width="1.6"/></svg>
<svg class="a" style="left:774px;top:613px" width="16" height="16" viewBox="774 613 16 16">
 <rect x="775.5" y="614.5" width="12" height="12" fill="none" stroke="#6b6b6b"/>
 <path d="M781.5 616v2.5M781.5 622.5v2.5M777 620.5h2.5M783.5 620.5h2.5" stroke="#777"/>
 <path d="M780.3 617.3l1.2-1.2l1.2 1.2M780.3 623.7l1.2 1.2l1.2-1.2M778.3 619.3l-1.2 1.2l1.2 1.2M784.7 619.3l1.2 1.2l-1.2 1.2" stroke="#777" fill="none" stroke-width="0.9"/>
</svg>

<div id="frameL" class="a"></div>
<div class="a" style="left:1px;top:162px;width:1px;height:448px;background:#EAEFEF"></div>
<div id="frameR" class="a"></div>
<div id="frameB" class="a"></div>
</body></html>
